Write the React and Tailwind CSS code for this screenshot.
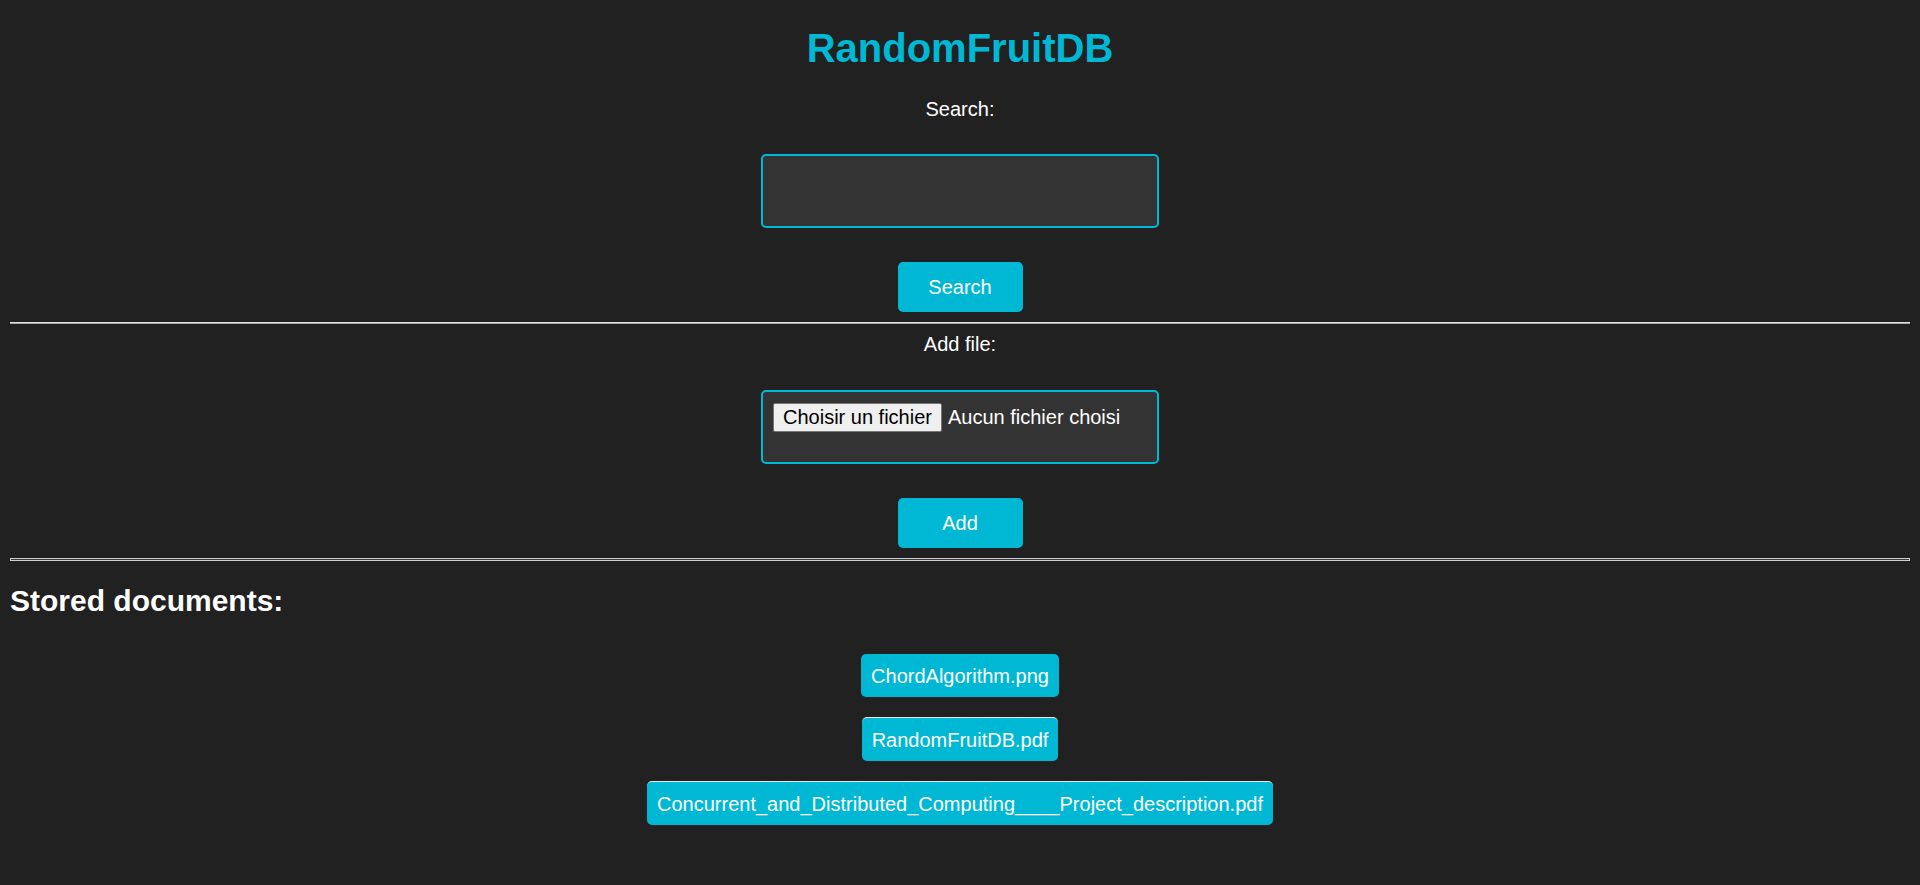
import React from "react";

const docs = [
  "ChordAlgorithm.png",
  "RandomFruitDB.pdf",
  "Concurrent_and_Distributed_Computing____Project_description.pdf",
];

export default function App() {
  return (
    <div className="min-h-screen bg-[#212121] px-[10px] text-white font-['Liberation_Sans',Arial,sans-serif]">
      <h1 className="pt-[25px] text-center text-[40px] leading-[46px] font-bold text-[#00b8d4]">
        RandomFruitDB
      </h1>

      <form className="flex flex-col items-center" onSubmit={(e) => e.preventDefault()}>
        <label className="mt-[27px] text-[20px] leading-[23px]">Search:</label>
        <input
          type="text"
          className="mt-[33px] h-[74px] w-[398px] rounded-[5px] border-2 border-[#00b8d4] bg-[#333333] px-[12px] text-[20px] text-white outline-none"
        />
        <button className="mt-[34px] h-[50px] w-[125px] rounded-[5px] bg-[#00b8d4] text-[20px] text-white">
          Search
        </button>
      </form>

      <hr className="mt-[10px] h-[2px] border-0 border-t border-b border-t-[#e2e2e2] border-b-[#a8a8a8]" />

      <form className="flex flex-col items-center" onSubmit={(e) => e.preventDefault()}>
        <label className="mt-[9px] text-[20px] leading-[23px]">Add file:</label>
        <div className="mt-[34px] h-[74px] w-[398px] rounded-[5px] border-2 border-[#00b8d4] bg-[#333333] px-[10px] pt-[11px]">
          <div className="flex items-center gap-[6px] text-[20px] leading-[23px]">
            <span className="h-[29px] rounded-[2px] border border-[#767676] bg-[#efefef] px-[9px] pt-[2px] text-black">
              Choisir un fichier
            </span>
            <span>Aucun fichier choisi</span>
          </div>
        </div>
        <button className="mt-[34px] h-[50px] w-[125px] rounded-[5px] bg-[#00b8d4] text-[20px] text-white">
          Add
        </button>
      </form>

      <hr className="mt-[10px] h-[3px] border border-[#cfcfcf] bg-[#3a3a3a]" />

      <h2 className="mt-[23px] text-[30px] leading-[34px] font-bold">Stored documents:</h2>

      <div className="mt-[36px] flex flex-col items-center gap-[20px]">
        {docs.map((d, i) => (
          <button
            key={d}
            className={
              i === 0
                ? "h-[43px] rounded-[5px] bg-[#00b8d4] px-[10px] text-[20px] text-white"
                : "h-[44px] rounded-[5px] border-t border-[#e8e8e8] bg-[#00b8d4] px-[10px] text-[20px] text-white"
            }
          >
            {d}
          </button>
        ))}
      </div>
    </div>
  );
}
